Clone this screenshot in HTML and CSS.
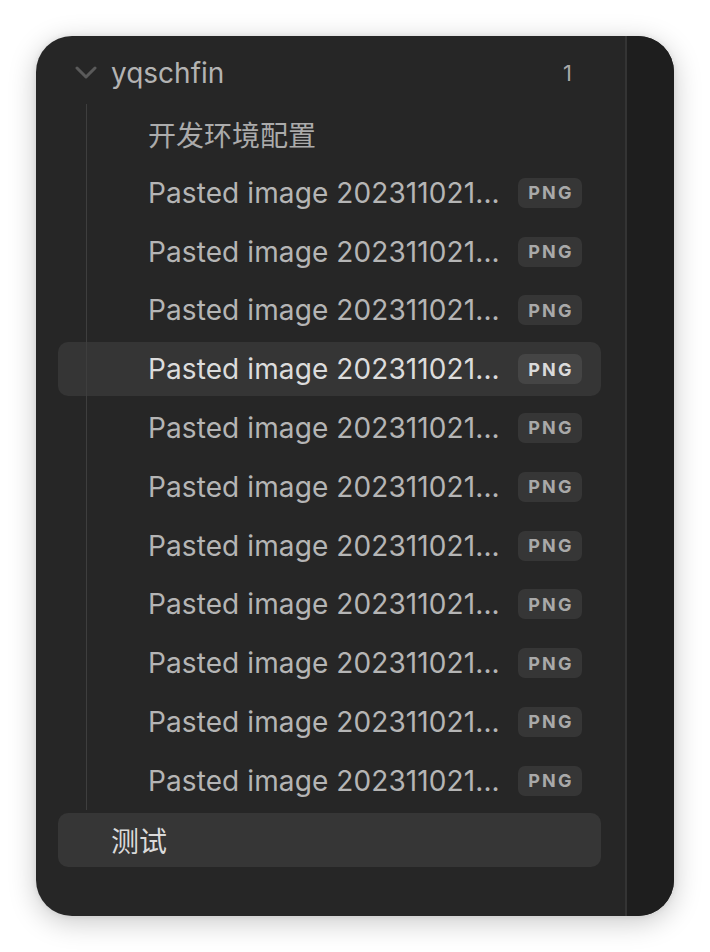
FILE: index.html
```html
<!DOCTYPE html>
<html>
<head>
<meta charset="utf-8">
<link rel="stylesheet" href="styles.css">
</head>
<body>
<div class="panel">
  <div class="main">
    <div class="row folder">
      <svg class="chev" width="22" height="14" viewBox="0 0 22 14"><polyline points="2,2 11,11 20,2" fill="none" stroke="#5a5a5a" stroke-width="3" stroke-linecap="round" stroke-linejoin="round"/></svg>
      <span class="folder-name">yqschfin</span>
      <span class="count">1</span>
    </div>
    <div class="children">
      <div class="row file"><span class="title cjk">开发环境配置</span></div>
      <div class="row file"><span class="title">Pasted image 202311021...</span><span class="badge">PNG</span></div>
      <div class="row file"><span class="title">Pasted image 202311021...</span><span class="badge">PNG</span></div>
      <div class="row file"><span class="title">Pasted image 202311021...</span><span class="badge">PNG</span></div>
      <div class="row file active"><span class="title">Pasted image 202311021...</span><span class="badge">PNG</span></div>
      <div class="row file"><span class="title">Pasted image 202311021...</span><span class="badge">PNG</span></div>
      <div class="row file"><span class="title">Pasted image 202311021...</span><span class="badge">PNG</span></div>
      <div class="row file"><span class="title">Pasted image 202311021...</span><span class="badge">PNG</span></div>
      <div class="row file"><span class="title">Pasted image 202311021...</span><span class="badge">PNG</span></div>
      <div class="row file"><span class="title">Pasted image 202311021...</span><span class="badge">PNG</span></div>
      <div class="row file"><span class="title">Pasted image 202311021...</span><span class="badge">PNG</span></div>
      <div class="row file"><span class="title">Pasted image 202311021...</span><span class="badge">PNG</span></div>
    </div>
    <div class="row top-file hover"><span class="title cjk">测试</span></div>
  </div>
  <div class="divider"></div>
  <div class="side"></div>
</div>
</body>
</html>
```
FILE: styles.css
```css
html, body {
  margin: 0;
  padding: 0;
  background: #ffffff;
}
body {
  font-family: Inter, "Noto Sans CJK SC", sans-serif;
  padding: 36px;
  width: 638px;
}
.panel {
  display: flex;
  width: 638px;
  height: 880px;
  border-radius: 36px;
  overflow: hidden;
  background: #262626;
  box-shadow: 0 6px 28px rgba(0, 0, 0, 0.22), 0 0 6px rgba(0, 0, 0, 0.08);
}
.main {
  width: 589px;
  box-sizing: border-box;
  padding: 10px 24px 0 22px;
  display: flex;
  flex-direction: column;
  gap: 5px;
}
.divider {
  width: 2px;
  background: #343434;
}
.side {
  flex: 1;
  background: #1e1e1e;
}
.row {
  height: 54px;
  flex: none;
  display: flex;
  align-items: center;
  border-radius: 10px;
  box-sizing: border-box;
  white-space: nowrap;
}
.folder {
  padding-left: 17px;
  padding-right: 29px;
}
.chev {
  display: block;
  flex: none;
}
.folder-name {
  margin-left: 14px;
  font-size: 28px;
  color: #b3b3b3;
  letter-spacing: 0;
}
.count {
  margin-left: auto;
  font-size: 22px;
  color: #a8a8a8;
}
.children {
  position: relative;
  margin-top: 2px;
  display: flex;
  flex-direction: column;
  gap: 4.8px;
}
.children::before {
  content: "";
  position: absolute;
  left: 28px;
  top: -3px;
  bottom: -2px;
  width: 1px;
  background: #3e3e3e;
}
.file {
  padding-left: 90px;
  padding-right: 19px;
}
.title {
  font-size: 28px;
  color: #b5b5b5;
  letter-spacing: 0.1px;
}
.cjk {
  font-family: "Noto Sans CJK SC", sans-serif;
  letter-spacing: 0;
  color: #ababab;
}
.badge {
  margin-left: auto;
  width: 64px;
  height: 30px;
  border-radius: 7px;
  background: #363636;
  color: #a9a9a9;
  font-size: 18px;
  font-weight: 700;
  letter-spacing: 2.2px;
  display: flex;
  align-items: center;
  justify-content: center;
  padding-left: 2px;
  box-sizing: border-box;
}
.active {
  background: #353535;
}
.active .title {
  color: #dcdcdc;
}
.active .badge {
  background: #454545;
  color: #dadada;
}
.top-file {
  padding-left: 53px;
}
.hover {
  background: #363636;
}
.hover .title {
  color: #dadada;
}
```
